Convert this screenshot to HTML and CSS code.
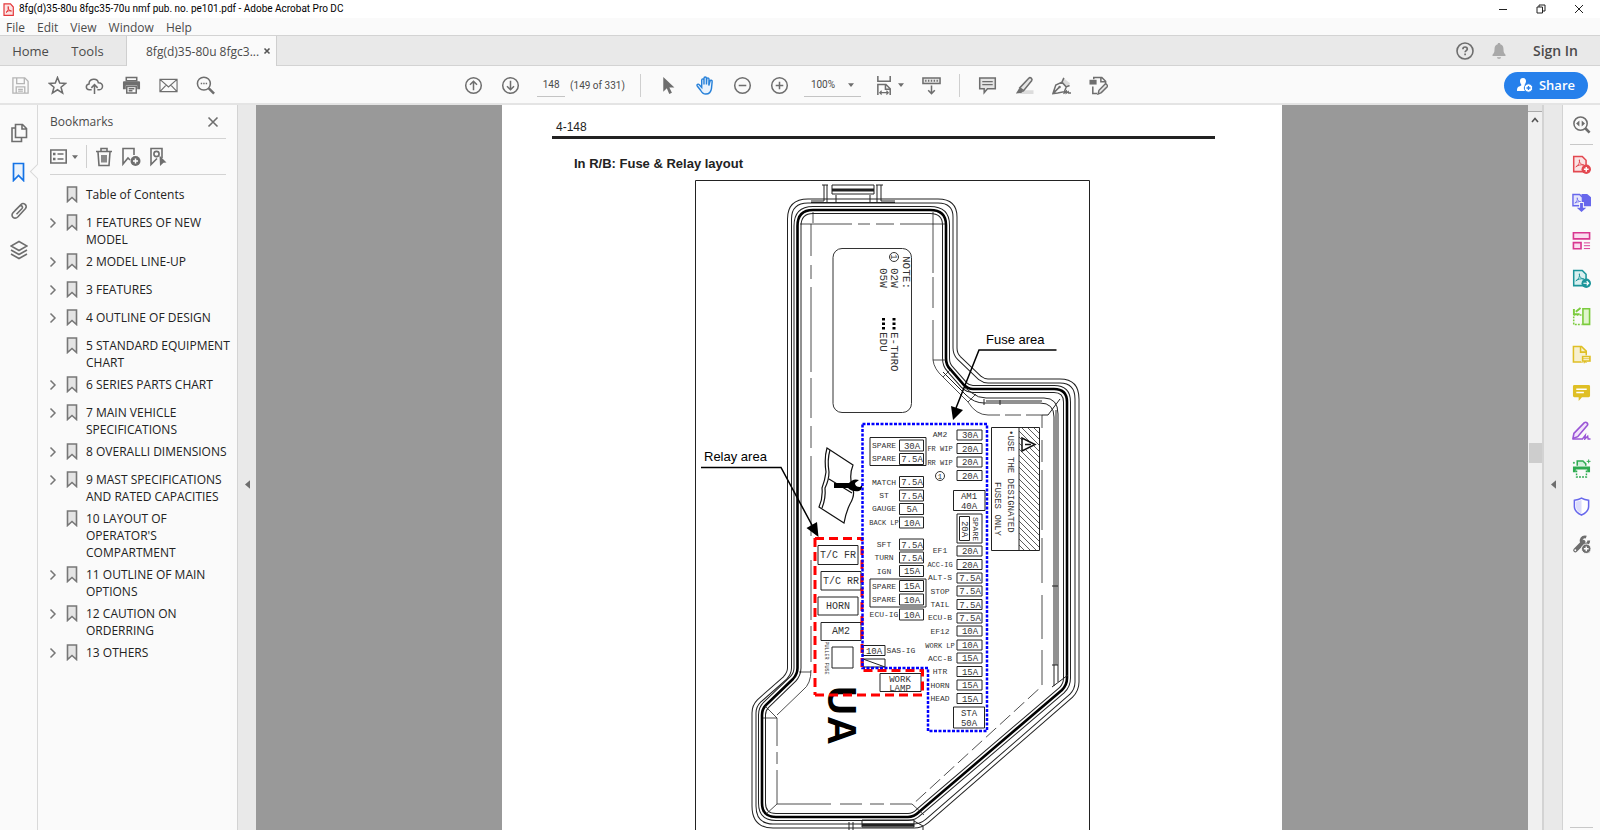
FILE: index.html
```html
<!DOCTYPE html>
<html lang="en">
<head>
    <meta charset="UTF-8">
    <meta name="viewport" content="width=device-width, initial-scale=1.0">
    <title>8fg(d)35-80u 8fgc35-70u nmf pub. no. pe101.pdf - Adobe Acrobat Pro DC</title>
    <link rel="stylesheet" href="styles.css">
</head>
<body>
    <svg class="defs" aria-hidden="true">
        <symbol id="bm" viewBox="0 0 12 17"><path d="M1.5 1h9v14.5L6 11.500l-4.500 4z" fill="#e4e4e4" stroke="#777" stroke-width="1.600"/></symbol>
        <symbol id="chev" viewBox="0 0 8 12"><path d="M1.500 1.500L6 6l-4.500 4.500" fill="none" stroke="#777" stroke-width="1.500"/></symbol>
        <symbol id="down" viewBox="0 0 6 4"><path d="M0 .3h6L3 4z" fill="#6e6e6e"/></symbol>
        <symbol id="left" viewBox="0 0 6 10"><path d="M6 0v10L0 5z" fill="#6e6e6e"/></symbol>
    </svg>

    <header class="titlebar">
        <svg class="logo" viewBox="0 0 11 13"><path d="M1 .8h6.500L10.300 4v8.300H1z" fill="#fbe4e4" stroke="#e5383b" stroke-width="1.200"/><path d="M3 9.500C5 8.500 6 5 5.200 3.500 4.500 6 6.500 8 8.500 8 6.500 7.300 4 8 3 9.500z" fill="none" stroke="#e5383b"/></svg>
        <h1>8fg(d)35-80u 8fgc35-70u nmf pub. no. pe101.pdf - Adobe Acrobat Pro DC</h1>
        <div class="window-controls">
            <button aria-label="Minimize"><svg viewBox="0 0 10 10"><path d="M1 5.500h8"/></svg></button>
            <button aria-label="Restore"><svg viewBox="0 0 10 10"><path d="M1 3h5.500v6H1zM3 3V1h6v6H6.500"/></svg></button>
            <button aria-label="Close"><svg viewBox="0 0 10 10"><path d="M1 1l8 8M9 1l-8 8"/></svg></button>
        </div>
    </header>

    <nav class="menubar">
        <button>File</button>
        <button>Edit</button>
        <button>View</button>
        <button>Window</button>
        <button>Help</button>
    </nav>

    <nav class="tabs">
        <button class="tab tab-home">Home</button>
        <button class="tab tab-tools">Tools</button>
        <div class="tab-doc">
            <button>8fg(d)35-80u 8fgc3...</button>
            <button aria-label="Close tab"><svg width="8" height="8" viewBox="0 0 8 8"><path d="M1.500 1.500l5 5M6.500 1.500l-5 5" stroke="#555" stroke-width="1.600"/></svg></button>
        </div>
        <div class="account">
            <button aria-label="Help"><svg width="20" height="20" viewBox="0 0 20 20"><circle cx="10" cy="10" r="8" fill="none" stroke="#6e6e6e" stroke-width="1.600"/><path d="M7.900 8.200c0-3 4.400-2.800 4.400-.3 0 1.600-2.200 1.700-2.200 3.400M10.100 12.600v1.700" fill="none" stroke="#6e6e6e" stroke-width="1.700"/></svg></button>
            <button aria-label="Notifications"><svg width="20" height="20" viewBox="0 0 20 20"><path d="M10 2c1 0 1.300.5 1.300 1.300 2.700.8 3.200 3 3.200 5.200 0 3 .8 4 2 5.300v1.200h-13v-1.200c1.200-1.300 2-2.300 2-5.300 0-2.200.5-4.400 3.200-5.200C8.700 2.500 9 2 10 2zM8 16.300h4c0 2-4 2-4 0z" fill="#a9a9a9"/></svg></button>
            <button class="sign-in">Sign In</button>
        </div>
    </nav>

    <div class="toolbar">
        <div class="tools">
            <button aria-label="Save" disabled><svg viewBox="0 0 20 20"><g fill="none" stroke="#b5b5b5" stroke-width="1.400"><path d="M2 2h12.500L18 5.500V18H2z"/><path d="M6 2v6h8V2M5.500 18v-6.500h9V18M7.500 14h5M7.500 16h5"/></g></svg></button>
            <button aria-label="Star"><svg viewBox="0 0 20 20"><path d="M10 1.500l2.300 6 6.300.3-4.900 4 1.700 6.200L10 14.500 4.600 18l1.700-6.200-4.900-4 6.300-.3z" class="line"/></svg></button>
            <button aria-label="Upload"><svg viewBox="0 0 20 20"><path d="M7 14.500H4.500C.6 14.500.2 9 4.300 8.300 4 2.500 13 1.500 14 7c6-.2 5.500 7.500 1 7.500h-2M10 19V9.500M6.700 12.500L10 9l3.300 3.500" class="line"/></svg></button>
            <button aria-label="Print"><svg viewBox="0 0 20 20"><path d="M4.500 1.500h11V5h-11z" class="line"/><path d="M1 6.500Q1 5.500 2 5.500h16q1 0 1 1V14h-3v-4H4v4H1z" fill="#6e6e6e"/><path d="M5 11h10v7H5zM7 13.500h6M7 15.500h4" class="line"/></svg></button>
            <button aria-label="Email"><svg viewBox="0 0 20 20"><path d="M1 3.500h18v13H1zM1 3.500l9 8 9-8M1 16.500l6.500-7M19 16.500l-6.500-7" class="line thin"/></svg></button>
            <button aria-label="Find"><svg viewBox="0 0 20 20"><circle cx="8.300" cy="8" r="6.800" class="line"/><path d="M13.500 13l5.500 5.500" stroke="#6e6e6e" stroke-width="2.600"/><path d="M5 8h1.500M7.600 8h1.500M10.200 8h1.500" stroke="#6e6e6e" stroke-width="1.600"/></svg></button>
        </div>
        <div class="tools tools-main">
            <button aria-label="Previous page"><svg viewBox="0 0 20 20"><circle cx="10" cy="10" r="8.200" class="line"/><path d="M10 15V5.800M6.300 9.200L10 5.500l3.700 3.700" class="line"/></svg></button>
            <button aria-label="Next page"><svg viewBox="0 0 20 20"><circle cx="10" cy="10" r="8.200" class="line"/><path d="M10 5v9.200M6.300 10.800l3.700 3.700 3.700-3.700" class="line"/></svg></button>
            <label class="page-no"><input type="text" value="148" aria-label="Page number"> <span>(149 of 331)</span></label>
            <i class="divider"></i>
            <button aria-label="Select"><svg viewBox="0 0 20 20"><path d="M4.500 1v15.500l3.700-3.600 2.600 6 2.800-1.300-2.700-5.600h5.300z" fill="#6e6e6e"/></svg></button>
            <button aria-label="Hand"><svg viewBox="0 0 20 20"><path d="M6 12V4.500c0-2 2.400-2 2.400 0V9 2.500c0-2 2.600-2 2.600 0V9l.3-5.700c.2-1.900 2.500-1.700 2.400.2L13.500 10l1.200-4.500c.6-1.700 2.600-1.100 2.300.6L16.300 13c-.5 4-2.500 6-6 6-3 0-4.200-1.500-5.500-4L1.300 10.500c-1-1.700 1-2.600 2.200-1.200z" fill="#e9f2fc" stroke="#2680d9" stroke-width="1.500"/></svg></button>
            <button aria-label="Zoom out"><svg viewBox="0 0 20 20"><circle cx="10" cy="10" r="8.200" class="line"/><path d="M6 10h8" class="line"/></svg></button>
            <button aria-label="Zoom in"><svg viewBox="0 0 20 20"><circle cx="10" cy="10" r="8.200" class="line"/><path d="M6 10h8M10 6v8" class="line"/></svg></button>
            <div class="zoom">
                <select aria-label="Zoom level"><option>100%</option></select>
                <svg width="6" height="4"><use href="#down"/></svg>
            </div>
            <button class="wide" aria-label="Fit width"><svg viewBox="0 0 20 20"><path d="M3 0v5.500h13V0M3 20V9h8.500l4.500 4.500V20M11 9v5h5" class="line"/><path d="M5 17.500h9M7 15.500l-2 2 2 2M12 15.500l2 2-2 2" class="line thin"/></svg><svg class="caret"><use href="#down"/></svg></button>
            <button aria-label="Scrolling"><svg viewBox="0 0 20 20"><path d="M1 2h18v6H1z" fill="#e4e4e4" stroke="#6e6e6e" stroke-width="1.600"/><path d="M4 4v2M7 4v2M10 4v2M13 4v2M16 4v2" stroke="#6e6e6e" stroke-width="1.400"/><path d="M10 10v8.500M6.500 15l3.500 3.500 3.500-3.500" class="line"/></svg></button>
            <i class="divider"></i>
            <button aria-label="Comment"><svg viewBox="0 0 20 20"><path d="M1.800 2h16.400v11.500H10L6.500 17.500v-4H1.800z" fill="#e4e4e4" stroke="#6e6e6e" stroke-width="1.600"/><path d="M4.500 6h11M4.500 9h11" stroke="#6e6e6e" stroke-width="1.300"/></svg></button>
            <button aria-label="Highlight"><svg viewBox="0 0 20 20"><path d="M9 15h10.500v4H5z" fill="#dcdcdc"/><path d="M5 12.500L14.500 2.300c1.500-1.500 4.500.5 3 2.700L9 15.500z" fill="#e4e4e4" stroke="#6e6e6e" stroke-width="1.600"/><path d="M4.500 12.500L9 16l-2.500 2-5.500.5z" fill="#6e6e6e"/></svg></button>
            <button aria-label="Sign"><svg viewBox="0 0 20 20"><path d="M12 2l7 5.500-3 4-5.500-5z" fill="#dcdcdc"/><path d="M1 18.500L4 9.500l6.500-3 4.500 5-2 5-7 1.500zM10.500 6.500L12.500 2M15 11.500l3.500-1.500M1.500 18l6-6" class="line"/><circle cx="8" cy="11.500" r="1.300" fill="#6e6e6e"/><path d="M12 18.500l3-2.500v2l2-1.500.5 1.500h2.500" class="line"/></svg></button>
            <button aria-label="Edit"><svg viewBox="0 0 20 20"><path d="M5 3.500V1.500h8.500l4 4V8M12.500 1.500V6h5M4 11v7.500h4.500" class="line"/><path d="M.5 4H8v5H.5z" fill="#6e6e6e"/><path d="M9.500 19l1-4 7-7 2.500 2.500-7 7z" fill="#e4e4e4" stroke="#6e6e6e" stroke-width="1.500"/></svg></button>
        </div>
        <button class="share"><svg width="16" height="16" viewBox="0 0 16 16"><path d="M6 1c2 0 3 1.300 3 3 0 1.600-.6 2.500-1.200 3.200V8.500L10 9.500 8.500 14H0c0-4 1-4 4.200-5.500V7.200C3.600 6.500 3 5.600 3 4c0-1.700 1-3 3-3z" fill="#fff"/><circle cx="11.500" cy="11" r="4.200" fill="#fff" stroke="#2680eb"/><path d="M9.500 11h4M11.500 9v4" stroke="#2680eb" stroke-width="1.300"/></svg>Share</button>
    </div>

    <main class="workspace">
        <nav class="rail">
            <button aria-label="Page thumbnails"><svg width="18" height="20" viewBox="0 0 18 20"><path d="M5.500 1.500h7l4 4v9h-11zM12 1.500V6h4.500M5.500 5H2v13.500h9.500v-4" class="line"/></svg></button>
            <button class="current" aria-label="Bookmarks"><svg width="18" height="20" viewBox="0 0 18 20"><path d="M3.500 1.500h10v17L8.500 13.500l-5 5z" fill="#e9f2fc" stroke="#1473e6" stroke-width="1.700"/></svg></button>
            <button aria-label="Attachments"><svg width="18" height="20" viewBox="0 0 18 20"><path d="M5 9.500l6-6c2.500-2.500 7 1 4.500 4L8 15.700c-3.500 3.500-8-.5-5-4l6.500-6.500c2-1.500 4 .5 2.500 2.300l-5.500 5.800" class="line"/></svg></button>
            <button aria-label="Layers"><svg width="18" height="20" viewBox="0 0 18 20"><path d="M9 1.500l8 4.500-8 4.500L1 6zM1 10l8 4.500 8-4.500M1 14l8 4.500 8-4.500" class="line"/></svg></button>
        </nav>

        <aside class="bookmarks">
            <div class="bookmarks-head">
                <h2>Bookmarks</h2>
                <button aria-label="Close panel"><svg width="12" height="12" viewBox="0 0 12 12"><path d="M1.500 1.500l9 9M10.500 1.500l-9 9" class="line"/></svg></button>
            </div>
            <div class="bookmarks-tools">
                <button aria-label="Options"><svg width="17" height="15" viewBox="0 0 17 15"><path d="M.8 1h15.400v13H.8zM7.500 5h6M7.500 10h6" class="line"/><path d="M3 3.800h2.500v2.500H3zM3 8.800h2.500v2.500H3z" fill="#6e6e6e"/></svg><svg width="6" height="4"><use href="#down"/></svg></button>
                <i class="divider"></i>
                <button aria-label="Delete"><svg width="18" height="20" viewBox="0 0 18 20"><path d="M3 5l1 13.500h10L15 5M1 4.500h16M6 4V1.500h6V4M7 8v7.500M11 8v7.500M9 8v7.500" class="line"/></svg></button>
                <button aria-label="New bookmark"><svg width="20" height="20" viewBox="0 0 20 20"><path d="M9 13l-2-2-5 6V1.500h11V8" class="line"/><circle cx="14.500" cy="14" r="5" fill="#6e6e6e"/><path d="M12 14h5M14.500 11.500v5" stroke="#fff" stroke-width="1.500"/></svg></button>
                <button aria-label="Find bookmark"><svg width="18" height="20" viewBox="0 0 18 20"><path d="M8 11.500l-6 6v-16h11V11" class="line"/><circle cx="7.500" cy="7" r="2.600" class="line"/><path d="M10.500 8.500l7 7-3 .3L11 19z" fill="#6e6e6e"/></svg></button>
            </div>
            <ul>
                <li><i></i><svg><use href="#bm"/></svg><a href="#">Table of Contents</a></li>
                <li><button aria-label="Expand"><svg><use href="#chev"/></svg></button><svg><use href="#bm"/></svg><a href="#">1 FEATURES OF NEW MODEL</a></li>
                <li><button aria-label="Expand"><svg><use href="#chev"/></svg></button><svg><use href="#bm"/></svg><a href="#">2 MODEL LINE-UP</a></li>
                <li><button aria-label="Expand"><svg><use href="#chev"/></svg></button><svg><use href="#bm"/></svg><a href="#">3 FEATURES</a></li>
                <li><button aria-label="Expand"><svg><use href="#chev"/></svg></button><svg><use href="#bm"/></svg><a href="#">4 OUTLINE OF DESIGN</a></li>
                <li><i></i><svg><use href="#bm"/></svg><a href="#">5 STANDARD EQUIPMENT CHART</a></li>
                <li><button aria-label="Expand"><svg><use href="#chev"/></svg></button><svg><use href="#bm"/></svg><a href="#">6 SERIES PARTS CHART</a></li>
                <li><button aria-label="Expand"><svg><use href="#chev"/></svg></button><svg><use href="#bm"/></svg><a href="#">7 MAIN VEHICLE SPECIFICATIONS</a></li>
                <li><button aria-label="Expand"><svg><use href="#chev"/></svg></button><svg><use href="#bm"/></svg><a href="#">8 OVERALLI DIMENSIONS</a></li>
                <li><button aria-label="Expand"><svg><use href="#chev"/></svg></button><svg><use href="#bm"/></svg><a href="#">9 MAST SPECIFICATIONS AND RATED CAPACITIES</a></li>
                <li><i></i><svg><use href="#bm"/></svg><a href="#">10 LAYOUT OF<br>OPERATOR'S<br>COMPARTMENT</a></li>
                <li><button aria-label="Expand"><svg><use href="#chev"/></svg></button><svg><use href="#bm"/></svg><a href="#">11 OUTLINE OF MAIN OPTIONS</a></li>
                <li><button aria-label="Expand"><svg><use href="#chev"/></svg></button><svg><use href="#bm"/></svg><a href="#">12 CAUTION ON ORDERRING</a></li>
                <li><button aria-label="Expand"><svg><use href="#chev"/></svg></button><svg><use href="#bm"/></svg><a href="#">13 OTHERS</a></li>
            </ul>
        </aside>

        <button class="gutter" aria-label="Collapse bookmarks"><svg width="5" height="9"><use href="#left"/></svg></button>

        <section class="document">
            <article class="page">
                <p class="page-head">4-148</p>
                <h3>In R/B: Fuse &amp; Relay layout</h3>
                <svg class="figure" viewBox="695 180 395 680" width="395" height="680" role="img" aria-label="Fuse and relay layout">
                    <defs>
                        <pattern id="hatch" width="6" height="6" patternUnits="userSpaceOnUse"><path d="M-1-1l8 8M-1 5l2 2M5-1l2 2" stroke="#333" stroke-width=".8"/></pattern>
                        <path id="rim" d="M808 201Q789.500 201 789.500 219V668Q789.500 673 785 678L759 701Q754 706 754 713V806Q754 826 773 826H914Q921 826 927 821L1071 696Q1077 690 1077 682V399Q1077 381 1060 381H988Q984 381 980 378L959 358Q955 354 955 348V217Q955 201 938 201Z"/>
                        <path id="seal" d="M813 210Q797.500 210 797.500 226V668Q797.500 674 793 679L766 705Q762 709 762 715V803Q762 817 776 817H908Q914 817 919 812L1062 690Q1067 685 1067 678V402Q1067 389 1054 389H973Q968 389 964 385L950 369Q946 365 946 358V225Q946 210 930 210Z"/>
                    </defs>
                    <!-- cover outline -->
                    <g fill="none" stroke="#222">
                        <use href="#rim" stroke-width="5"/><use href="#rim" stroke="#fff" stroke-width="3"/>
                        <use href="#seal" stroke-width="8"/><use href="#seal" stroke="#fff" stroke-width="6"/>
                        <use href="#seal" stroke="#000" stroke-width="2.600"/>
                        <path d="M943 372L966 395Q974 403 984 403H1040Q1054 403 1054 417V686M964 387L972 393Q978 398 986 398H1044Q1058 398 1058 414V682M984 399v6M1000 400v5M986 401h56M1056 410V665M1052 586h6M1052 665h6M1052 687l16-12M1060 399l-12 16h-6"/>
                        <path d="M811 224h41M858 224h12M876 224h18M900 224h33V273M933 277V308M933 320V360Q934 369 943 377M811 224V256M811 265v14M811 287V372M811 378V418M811 426v22M811 456v80M811 560v60M811 626v36M811 670Q811 684 803 690L777 715M943 377L968 402Q976 415 988 415H1000M1005 415h16M1026 415h16V428M1042 440v22M1042 470v60M1042 538v45M1042 595v44M1042 650v35M1042 686L912 805" stroke-width=".8"/>
                        <path d="M1042 686L912 805" stroke="#fff" stroke-width="2" stroke-dasharray="5 14"/>
                        <path d="M777 718v28M777 752v12M777 770v34h54M840 804h22M870 804h14M890 804h22l12 11M777 804l-12 11M777 718l-12-12M811 672h-12M813 212v11M800 224h11M933 212v12h12M933 360h13M943 377l8-8M968 402l8-8M763 718h14" stroke-width=".8"/>
                    </g>
                    <!-- clips -->
                    <g fill="none" stroke="#222">
                        <path d="M824 185v16h-13M827 185v18M822 185h6M877 185v18M881 185v16h14M876 185h7"/>
                        <path d="M832 185h42v9h-42zM836 195v7M870 195v7M811 202.500h84"/>
                        <path d="M832 190h42" stroke-width="3"/>
                        <path d="M849 822v8M853 822v8M914 821l9 5v4"/><path d="M862 820h52v7h-52z"/><path d="M862 825h52" stroke-width="3"/>
                    </g>
                    <!-- note plate -->
                    <rect x="833" y="248.500" width="78.500" height="164" rx="9" fill="#fff" stroke="#333"/>
                    <g class="cad t11">
                        <text transform="translate(903 256) rotate(90)">NOTE:</text>
                        <text transform="translate(891 268) rotate(90)">02W</text>
                        <text transform="translate(880 268) rotate(90)">05W</text>
                        <text transform="translate(891 332) rotate(90)">E-THRO</text>
                        <text transform="translate(880 332) rotate(90)">EDU</text>
                        <text class="t9" transform="translate(891 254) rotate(90)">1</text>
                    </g>
                    <circle cx="894" cy="257" r="4.500" fill="none" stroke="#333"/>
                    <path d="M894 318v12M883.500 318v12" stroke="#000" stroke-width="3" stroke-dasharray="2.500 2"/>
                    <!-- booklet and wrench -->
                    <g fill="#fff" stroke="#111" stroke-width="1.200">
                        <path d="M827 448L853 465Q849 475 852 486 856 494 850 504 846 512 844 523L819 507Q823 498 822 488 825 480 826 472 824 458 827 448z"/>
                        <path d="M830 450Q827 460 829 472 829 480 825 488 826 498 822 508M829 479L852 493" fill="none"/>
                    </g>
                    <path d="M834 483h15q4-5 10-3l-4 3q0 4 5 4l2-2q1 4-3 6-7 1-11-3h-14z"/>
                    <!-- fuses -->
                    <path class="box" d="M957 430h25v10h-25zM957 443.500h25v10h-25zM957 457h25v10h-25zM957 470.500h25v10h-25zM957 546h25v10h-25zM957 559.500h25v10h-25zM957 573h25v10h-25zM957 586h25v10h-25zM957 599.500h25v10h-25zM957 613h25v10h-25zM957 626h25v10h-25zM957 640h25v10h-25zM957 653h25v10h-25zM957 666.500h25v10h-25zM957 680h25v10h-25zM957 693.500h25v10h-25z"/>
                    <path class="box" d="M899.500 440h24v11h-24zM899.500 453.500h24v11h-24zM899.500 476.500h24v11h-24zM899.500 490h24v11h-24zM899.500 503.500h24v11h-24zM899.500 517h24v11h-24zM899.500 539h24v11h-24zM899.500 552h24v11h-24zM899.500 565.500h24v11h-24zM899.500 580.500h24v11h-24zM899.500 594h24v11h-24zM899.500 609h24v11h-24zM863 645.500h22v10h-22zM863 659h22v8h-22zM863 659l22 8"/>
                    <path class="box" d="M870 437.500h56v28h-56zM870 579h56v28h-56zM953.500 490.500h31.500v20h-31.500zM957 514h25v29h-25zM959.500 516.500h10v24h-10zM953.500 707h31v21h-31z"/>
                    <g class="cad t9 mid">
                        <text x="970" y="438">30A</text><text x="970" y="452">20A</text><text x="970" y="465">20A</text><text x="970" y="479">20A</text>
                        <text x="970" y="554">20A</text><text x="970" y="568">20A</text><text x="970" y="581">7.5A</text><text x="970" y="594">7.5A</text>
                        <text x="970" y="608">7.5A</text><text x="970" y="621">7.5A</text><text x="970" y="634">10A</text><text x="970" y="648">10A</text>
                        <text x="970" y="661">15A</text><text x="970" y="675">15A</text><text x="970" y="688">15A</text><text x="970" y="702">15A</text>
                        <text x="912" y="449">30A</text><text x="912" y="462">7.5A</text><text x="912" y="485">7.5A</text><text x="912" y="499">7.5A</text>
                        <text x="912" y="512">5A</text><text x="912" y="526">10A</text><text x="912" y="548">7.5A</text><text x="912" y="561">7.5A</text>
                        <text x="912" y="574">15A</text><text x="912" y="589">15A</text><text x="912" y="603">10A</text><text x="912" y="618">10A</text>
                        <text x="874" y="654">10A</text>
                        <text x="969" y="499">AM1</text><text x="969" y="509">40A</text><text x="969" y="716">STA</text><text x="969" y="726">50A</text>
                        <text transform="translate(962 529) rotate(90)">20A</text>
                        <text class="t8" transform="translate(973 529) rotate(90)">SPARE</text>
                        <text x="900" y="682">WORK</text><text x="900" y="691">LAMP</text>
                    </g>
                    <g class="cad t8 mid">
                        <text x="940" y="437">AM2</text><text class="t7" x="940" y="451">FR WIP</text><text class="t7" x="940" y="465">RR WIP</text><text x="940" y="479">1</text>
                        <text x="940" y="553">EF1</text><text class="t7" x="940" y="567">ACC-IG</text><text x="940" y="580">ALT-S</text><text x="940" y="594">STOP</text>
                        <text x="940" y="607">TAIL</text><text x="940" y="620">ECU-B</text><text x="940" y="634">EF12</text><text class="t7" x="940" y="648">WORK LP</text>
                        <text x="940" y="661">ACC-B</text><text x="940" y="674">HTR</text><text x="940" y="688">HORN</text><text x="940" y="701">HEAD</text>
                        <text x="884" y="448">SPARE</text><text x="884" y="461">SPARE</text><text x="884" y="485">MATCH</text><text x="884" y="498">ST</text>
                        <text x="884" y="511">GAUGE</text><text class="t7" x="884" y="525">BACK LP</text><text x="884" y="547">SFT</text><text x="884" y="560">TURN</text>
                        <text x="884" y="574">IGN</text><text x="884" y="589">SPARE</text><text x="884" y="602">SPARE</text><text x="884" y="617">ECU-IG</text>
                        <text x="901" y="653">SAS-IG</text>
                    </g>
                    <circle cx="940" cy="476" r="4.500" fill="none" stroke="#333"/>
                    <!-- relays -->
                    <path class="box" d="M818 545.500h40v19h-40zM821 571.500h40v18.500h-40zM818 597h40v18h-40zM821 622.500h40v18h-40zM832 647h21v21h-21zM880 673.500h41v18h-41z"/>
                    <g class="cad t10 mid">
                        <text x="838" y="558">T/C FR</text><text x="841" y="584">T/C RR</text><text x="838" y="609">HORN</text><text x="841" y="634">AM2</text>
                        <text class="t5" transform="translate(825 658) rotate(90)">PULLER FUSE</text>
                    </g>
                    <g class="ua">
                        <text transform="translate(828 686) rotate(90)">U</text>
                        <text transform="translate(828 716) rotate(90)">A</text>
                    </g>
                    <!-- warning label -->
                    <path d="M1019 427.500h20.500v123H1019z" fill="url(#hatch)"/>
                    <path class="box" d="M991.500 427.500h48v123h-48zM1019 427.500v123"/>
                    <path d="M1022 438v13l13-6.500z" fill="#fff" stroke="#111" stroke-width="1.500"/><path d="M1025 444.500h6" stroke="#111" stroke-width="1.500"/>
                    <g class="cad t9">
                        <text transform="translate(1008 430) rotate(90)">•USE THE DESIGNATED</text>
                        <text transform="translate(995 482) rotate(90)">FUSES ONLY</text>
                    </g>
                    <!-- areas and callouts -->
                    <path d="M815 538V695M815 538.500H862M815 695H922.500V670.500H862V538" fill="none" stroke="#f00" stroke-width="3" stroke-dasharray="9 5"/>
                    <path d="M862.500 424H987V731H928V668H862.500Z" fill="none" stroke="#00f" stroke-width="2.500" stroke-dasharray="3 1.500"/>
                    <path d="M1056.500 350H979L956 408M701 467.500H781L813 527" fill="none" stroke="#000" stroke-width="1.500"/>
                    <path d="M953 420l-2-14 12 4zM818.500 537l-12-9 10.500-6z"/>
                    <text class="callout" x="986" y="344">Fuse area</text>
                    <text class="callout" x="704" y="461">Relay area</text>
                    <path d="M695.500 870V180.500h394V870" fill="none" stroke="#222"/>
                </svg>
            </article>
            <div class="scrollbar">
                <i class="split"></i>
                <svg width="8" height="6" viewBox="0 0 8 6"><path d="M1 5l3-3.500L7 5" fill="none" stroke="#555" stroke-width="1.600"/></svg>
                <i class="thumb"></i>
            </div>
        </section>

        <button class="gutter" aria-label="Collapse tools"><svg width="5" height="9"><use href="#left"/></svg></button>

        <nav class="right-rail">
            <button aria-label="Search tools"><svg viewBox="0 0 20 20"><circle cx="9" cy="9" r="7" class="line"/><path d="M14 14l4.500 4.500" stroke="#6e6e6e" stroke-width="2.800"/><path d="M7.800 5.800v6.400L4.300 9zM10.200 5.800v6.400L13.700 9z" fill="#6e6e6e"/></svg></button>
            <i class="rule"></i>
            <button aria-label="Create PDF"><svg viewBox="0 0 20 20"><path d="M1.800 1.500h9l4 4v12h-13z" fill="#fae3e4" stroke="#e34850" stroke-width="1.600"/><path d="M4 12.500c3-1.500 4.500-5 3.800-7.500-.6 3 2.200 5.500 4.700 5.500-3-.6-6.500.2-8.500 2z" fill="none" stroke="#e34850"/><circle cx="15" cy="15" r="5" fill="#e34850"/><path d="M12.500 15h5M15 12.500v5" stroke="#fff" stroke-width="1.500"/></svg></button>
            <button aria-label="Combine files"><svg viewBox="0 0 20 20"><path d="M10 1h6l4 3.500V14h-10z" fill="#6767ec"/><path d="M1 1.500h7l3 3v9H1z" fill="#e5e5fc" stroke="#6767ec" stroke-width="1.500"/><path d="M3 10.500c2-1 3-3.500 2.500-5.500 0 2.500 1.500 4 3.500 4-2 0-4 .5-6 1.500z" fill="none" stroke="#6767ec" stroke-width=".8"/><path d="M10 9.500v7" stroke="#fafafa" stroke-width="5"/><path d="M8.500 10.500h3v5H15L10 20l-5-4.500h3.500z" fill="#6767ec"/></svg></button>
            <button aria-label="Organize pages"><svg viewBox="0 0 20 20"><path d="M1.500 1.800h17v6.500h-17zM1.500 12.200h8v6.500h-8z" fill="#fbdcef" stroke="#d83790" stroke-width="1.700"/><path d="M12.500 12.500H19M12.500 15.500H19M12.500 18.500H19" stroke="#d83790"/></svg></button>
            <button aria-label="Export PDF"><svg viewBox="0 0 20 20"><path d="M1.800 1.500h9l4 4v12h-13z" fill="#d9f0f0" stroke="#1b959a" stroke-width="1.600"/><path d="M4 12.500c3-1.500 4.500-5 3.800-7.500-.6 3 2.200 5.500 4.700 5.500-3-.6-6.500.2-8.500 2z" fill="none" stroke="#1b959a"/><circle cx="15" cy="15" r="5" fill="#1b959a"/><path d="M12 15h5.500M15.500 12.800l2 2.200-2 2.200" fill="none" stroke="#fff" stroke-width="1.300"/></svg></button>
            <button aria-label="Compare files"><svg viewBox="0 0 20 20"><path d="M11.500 1.800h7v16.500h-7z" fill="#e0f5cd" stroke="#7bcb3d" stroke-width="1.700"/><path d="M10 8.500H1.800v9.800H10" fill="none" stroke="#7bcb3d" stroke-width="1.600" stroke-dasharray="2 1.200"/><path d="M9 1L4 5M2 2v5.500h6" fill="none" stroke="#7bcb3d" stroke-width="2"/></svg></button>
            <button aria-label="Protect"><svg viewBox="0 0 20 20"><path d="M1.500 1.500h8.500l5 5v11.500H1.500z" fill="#f7f0cf" stroke="#dfbf25" stroke-width="1.600"/><path d="M9 1.500v6h6" fill="none" stroke="#dfbf25" stroke-width="1.600"/><path d="M10 11h10v7h-5l-2.500 2v-2H10z" fill="#dfbf25" stroke="#fafafa" stroke-width=".5"/><path d="M12 13.500h6M12 15.500h6" stroke="#fff"/></svg></button>
            <button aria-label="Comment"><svg viewBox="0 0 20 20"><path d="M2.500 2h15q1.500 0 1.500 1.500v10q0 1.500-1.500 1.500h-7L7 19v-4H2.500Q1 15 1 13.500v-10Q1 2 2.500 2z" fill="#dfbf25"/><path d="M4.500 6.500h11M4.500 10h8" stroke="#fff" stroke-width="1.500"/></svg></button>
            <button aria-label="Fill and sign"><svg viewBox="0 0 20 20"><path d="M2 13L13 1.800c2-1.500 4.500 1 3 3L6 16.500 1 18.500z" fill="#f2e3fb" stroke="#9a55d6" stroke-width="1.700"/><path d="M1 19h10l3-4-.5 4 3-3 .5 3h2.500" fill="none" stroke="#9a55d6" stroke-width="1.500"/></svg></button>
            <button aria-label="Scan and OCR"><svg viewBox="0 0 20 20"><path d="M5.500 7V2h6l3 3v2" fill="#d2f1dc" stroke="#2dab50" stroke-width="1.600"/><path d="M1 8h18v6h-3v-3H4v3H1z" fill="#2dab50"/><path d="M4.800 12v7h10.400v-7" fill="none" stroke="#2dab50" stroke-width="1.500" stroke-dasharray="2 1.200"/><path d="M17.500.5v4M15.500 2.500h4M2 3v2M1 4h2" stroke="#2dab50"/></svg></button>
            <button aria-label="Protect PDF"><svg viewBox="0 0 20 20"><path d="M10 1.200c2.500 1.500 4.500 2 7.500 2.300V10c0 4-3 7-7.500 9-4.500-2-7.500-5-7.500-9V3.500C5.500 3.200 7.500 2.700 10 1.200z" fill="#fff" stroke="#6767ec" stroke-width="1.600"/><path d="M10 3v14.500c-3.500-1.600-5.800-4-5.800-7.500V5C6.500 4.600 8 4.200 10 3z" fill="#dcdcfb"/></svg></button>
            <button aria-label="More tools"><svg viewBox="0 0 20 20"><path d="M3.500 16L12 7.500" stroke="#6e6e6e" stroke-width="4.500" stroke-linecap="round"/><path d="M15 2.200a4 4 0 1 0 2.600 3.600" fill="none" stroke="#6e6e6e" stroke-width="3"/><circle cx="3.500" cy="16" r="1" fill="#fff"/><circle cx="15" cy="14.500" r="5" fill="#6e6e6e" stroke="#fafafa"/><path d="M12.500 14.500h5M15 12v5" stroke="#fff" stroke-width="1.500"/></svg></button>
            <i class="rule rule-end"></i>
        </nav>
    </main>
</body>
</html>
```
FILE: styles.css
```css
* {
    box-sizing: border-box;
}
body {
    display: flex;
    flex-direction: column;
    height: 100vh;
    margin: 0;
    overflow: hidden;
    font-family: "Open Sans", "Noto Sans", sans-serif;
    font-size: 12px;
    color: #4b4b4b;
    background-color: #fafafa;
}
button {
    display: flex;
    align-items: center;
    justify-content: center;
    padding: 0;
    border: none;
    background: none;
    color: inherit;
    font: inherit;
    cursor: pointer;
}
h1, h2, h3, p, ul {
    margin: 0;
    padding: 0;
    font-weight: normal;
}
svg {
    flex: none;
}
.defs {
    position: absolute;
    width: 0;
    height: 0;
}
.line {
    fill: none;
    stroke: #6e6e6e;
    stroke-width: 1.6;
}
.thin {
    stroke-width: 1.2;
}
.divider {
    width: 1px;
    height: 23px;
    background-color: #cfcfcf;
}

/* window */
.titlebar {
    display: flex;
    align-items: center;
    height: 18px;
    padding-left: 3px;
    background-color: #fff;
}
.titlebar h1 {
    margin-left: 5px;
    font-family: Roboto, "Open Sans", sans-serif;
    font-size: 10px;
    line-height: 18px;
    color: #000;
}
.logo {
    width: 11px;
    height: 13px;
}
.window-controls {
    display: flex;
    margin-left: auto;
    padding-right: 2px;
}
.window-controls button {
    width: 38px;
    height: 16px;
}
.window-controls svg {
    width: 10px;
    height: 10px;
    fill: none;
    stroke: #222;
}
.menubar {
    display: flex;
    gap: 12px;
    height: 17px;
    padding: 1px 0 0 6px;
}
.tabs {
    display: flex;
    height: 31px;
    border-top: 1px solid #d3d3d3;
    border-bottom: 1px solid #d3d3d3;
    background-color: #e9e9e9;
    font-size: 13px;
}
.tab-home {
    width: 61px;
}
.tab-tools {
    width: 65px;
    padding-right: 12px;
}
.tab-doc {
    display: flex;
    gap: 4px;
    align-items: center;
    height: 30px;
    padding: 0 5px 0 19px;
    border-left: 1px solid #cfcfcf;
    border-right: 1px solid #cfcfcf;
    background-color: #fafafa;
    font-size: 12px;
}
.account {
    display: flex;
    gap: 14px;
    align-items: center;
    margin-left: auto;
    padding-right: 22px;
}
.sign-in {
    margin-left: 10px;
    font-size: 14px;
    font-weight: 600;
}

/* toolbar */
.toolbar {
    display: grid;
    grid-template-columns: 1fr auto 1fr;
    align-items: center;
    height: 39px;
    border-bottom: 2px solid #e4e4e4;
    padding: 1px 12px 0 8px;
}
.tools {
    display: flex;
    gap: 12px;
    align-items: center;
}
.tools-main {
    padding-right: 24px;
}
.tools button {
    width: 25px;
    height: 25px;
}
.tools svg {
    width: 19px;
    height: 19px;
}
.tools .divider {
    margin: 0 3px;
}
.page-no {
    display: flex;
    gap: 5px;
    align-items: center;
    margin-left: 2px;
    font-family: Roboto, "Open Sans", sans-serif;
    font-size: 10px;
}
.page-no input {
    width: 28px;
    height: 24px;
    padding: 0;
    border: none;
    border-bottom: 1px solid #c4c4c4;
    background: none;
    color: inherit;
    font: inherit;
    text-align: center;
}
.zoom {
    display: grid;
    align-items: center;
    width: 57px;
}
.zoom select, .zoom svg {
    grid-area: 1 / 1;
}
.zoom select {
    height: 24px;
    padding: 0 0 0 7px;
    border: none;
    border-bottom: 1px solid #c4c4c4;
    border-radius: 0;
    background: none;
    color: inherit;
    font-family: Roboto, "Open Sans", sans-serif;
    font-size: 10px;
    appearance: none;
}
.zoom svg {
    width: 6px;
    height: 4px;
    margin-right: 7px;
    justify-self: end;
    pointer-events: none;
}
.tools .wide {
    gap: 4px;
    width: 34px;
}
.tools .caret {
    width: 6px;
    height: 4px;
}
.share {
    gap: 6px;
    justify-self: end;
    width: 84px;
    height: 27px;
    border-radius: 14px;
    background-color: #2680eb;
    color: #fff;
    font-size: 13px;
    font-weight: 600;
}

/* side panels */
.workspace {
    display: flex;
    flex: 1;
    min-height: 0;
}
.rail {
    display: flex;
    flex-direction: column;
    gap: 18px;
    align-items: center;
    width: 38px;
    padding-top: 17px;
    border-right: 1px solid #d9d9d9;
}
.rail button {
    width: 37px;
    height: 21px;
}
.rail .current {
    position: relative;
}
.rail .current::after {
    content: "";
    position: absolute;
    right: -6px;
    width: 10px;
    height: 10px;
    border-left: 1px solid #d9d9d9;
    border-bottom: 1px solid #d9d9d9;
    background-color: #fafafa;
    transform: rotate(45deg);
}
.bookmarks {
    width: 199px;
}
.bookmarks-head {
    display: flex;
    align-items: center;
    justify-content: space-between;
    height: 34px;
    margin: 0 11px 0 12px;
    padding-right: 7px;
    border-bottom: 1px solid #d3d3d3;
}
.bookmarks h2 {
    font-size: 12px;
}
.bookmarks-tools {
    display: flex;
    gap: 8px;
    align-items: center;
    height: 36px;
    margin: 0 11px 0 12px;
    border-bottom: 1px solid #d3d3d3;
}
.bookmarks-tools button:first-child {
    gap: 5px;
}
.bookmarks ul {
    padding: 11px 0 0 9px;
    list-style: none;
}
.bookmarks li {
    display: grid;
    grid-template-columns: 12px 12px 1fr;
    align-items: start;
    min-height: 28px;
    padding-bottom: 5px;
    line-height: 17px;
}
.bookmarks li > svg {
    width: 12px;
    height: 17px;
    margin-left: 7px;
}
.bookmarks li button {
    height: 17px;
}
.bookmarks li button svg {
    width: 8px;
    height: 12px;
}
.bookmarks a {
    padding-left: 15px;
    color: #222;
    text-decoration: none;
}
.gutter {
    width: 19px;
    padding-top: 33px;
    border-left: 1px solid #d3d3d3;
    background-color: #e9e9e9;
}
.right-rail {
    display: flex;
    flex-direction: column;
    gap: 14px;
    align-items: center;
    width: 38px;
    padding-top: 7px;
    border-left: 1px solid #d3d3d3;
}
.right-rail button {
    width: 24px;
    height: 24px;
}
.right-rail button svg {
    width: 19px;
    height: 19px;
}
.rule {
    width: 23px;
    height: 1px;
    margin: -6px 0 -7px;
    background-color: #c8c8c8;
}
.rule-end {
    margin: auto 0 2px;
}

/* document */
.document {
    display: flex;
    flex: 1;
    min-width: 0;
    overflow: hidden;
    background-color: #999;
}
.page {
    width: 780px;
    height: 1100px;
    margin: 0 auto;
    padding: 15px 67px 0 50px;
    background-color: #fff;
    color: #222;
    font-family: "Liberation Sans", Arial, sans-serif;
}
.page-head {
    padding: 0 0 2px 4px;
    border-bottom: 3px solid #222;
    line-height: 14px;
}
.page h3 {
    padding: 17px 0 8px 22px;
    font-size: 13px;
    font-weight: bold;
    line-height: 16px;
}
.figure {
    display: block;
    margin-left: 143px;
}
.box {
    fill: none;
    stroke: #222;
}
.cad {
    fill: #333;
    font-family: "Liberation Mono", monospace;
}
.mid {
    text-anchor: middle;
}
.t11 {
    font-size: 11px;
}
.t10 {
    font-size: 10px;
}
.t9 {
    font-size: 9px;
}
.t8 {
    font-size: 8px;
}
.t7 {
    font-size: 7px;
}
.t5 {
    font-size: 5px;
}
.ua {
    font-size: 40px;
    font-weight: bold;
    fill: #000;
}
.callout {
    font-size: 13px;
}
.scrollbar {
    display: flex;
    flex-direction: column;
    align-items: center;
    width: 15px;
    border-right: 1px solid #d3d3d3;
    background-color: #f0f0f0;
}
.split {
    width: 100%;
    height: 7px;
    margin-bottom: 5px;
    border-bottom: 1px solid #aaa;
    background-color: #e4e4e4;
}
.thumb {
    width: 13px;
    height: 20px;
    margin-top: 320px;
    background-color: #cdcdcd;
}
```
